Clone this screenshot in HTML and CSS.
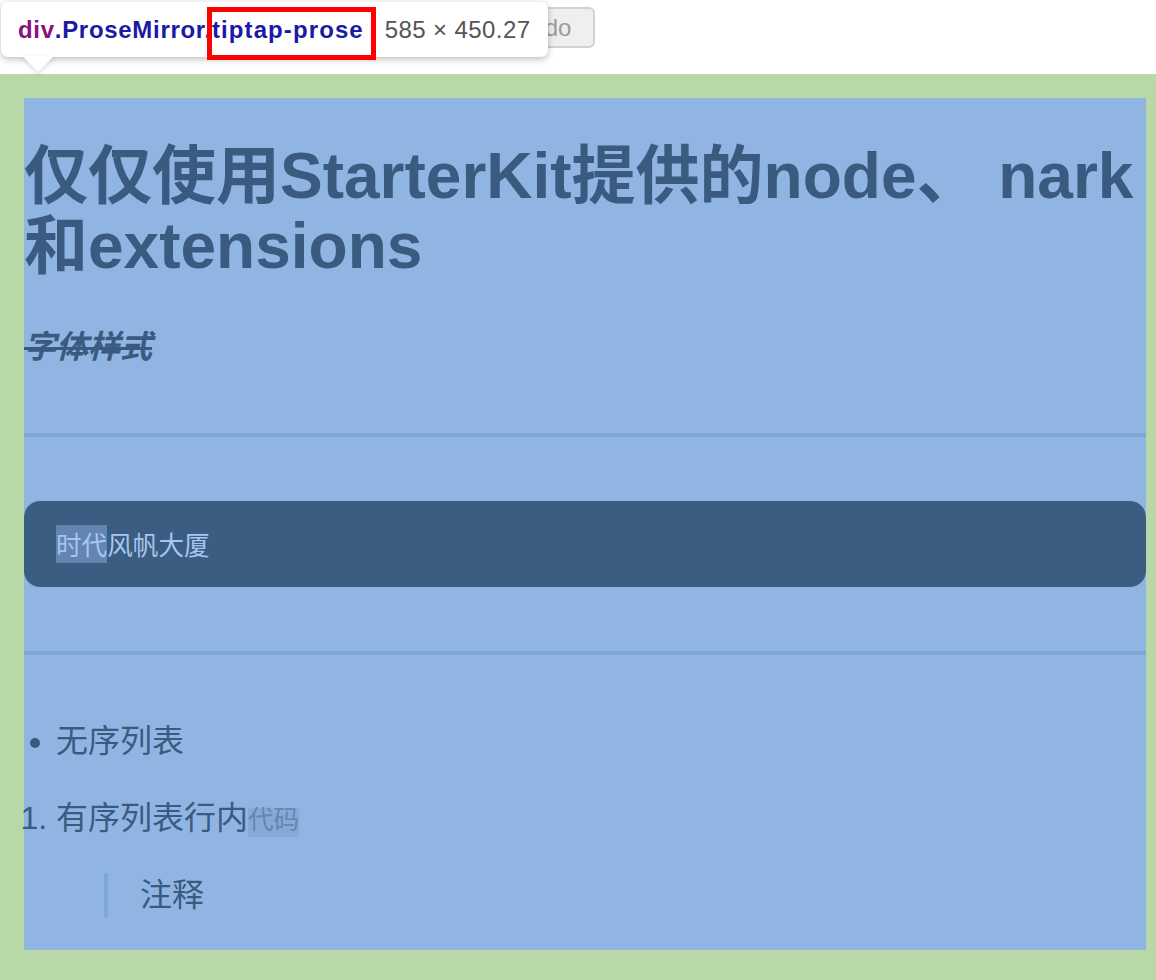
FILE: index.html
```html
<!DOCTYPE html>
<html lang="zh-CN">
<head>
<meta charset="utf-8">
<title>Tiptap</title>
<link rel="stylesheet" href="styles.css">
</head>
<body>
<div class="toolbar">
  <button class="btn" type="button">Undo</button>
</div>

<div class="editor">
  <div class="prose">
    <h1>仅仅使用StarterKit提供的node、 nark和extensions</h1>
    <p class="styled"><strong><em><s>字体样式</s></em></strong></p>
    <hr>
    <pre><code><span class="sel">时代</span>风帆大厦</code></pre>
    <hr>
    <ul>
      <li>无序列表</li>
    </ul>
    <ol>
      <li>有序列表行内<code class="inline">代码</code></li>
    </ol>
    <blockquote>注释</blockquote>
  </div>
</div>

<div class="tooltip">
  <div class="tip-text">
    <span class="tag">div</span><span class="cls">.ProseMirror.</span><span class="cls wide">tiptap-prose</span>
    <span class="size">585 × 450.27</span>
  </div>
  <div class="tip-arrow"></div>
</div>
<div class="mark"></div>
</body>
</html>
```

FILE: styles.css
```css
html, body {
  margin: 0;
  padding: 0;
  background: #ffffff;
}

body {
  font-family: "Liberation Sans", "Noto Sans CJK SC", sans-serif;
  color: #3a5a80;
}

.toolbar {
  height: 74px;
  box-sizing: border-box;
  padding: 7px 0 0 490px;
  display: flex;
  align-items: flex-start;
}

.btn {
  height: 41px;
  padding: 0 22px;
  border: 2px solid #d2d2d2;
  border-radius: 6px;
  background: #efefef;
  color: #9b9b9b;
  font-family: "Liberation Sans", sans-serif;
  font-size: 24px;
}

.editor {
  background: #b8d8a8;
  padding: 24px 10px 31px 24px;
}

.prose {
  background: #90b5e2;
  display: flow-root;
}

.prose h1 {
  font-size: 64px;
  line-height: 1.1;
  font-weight: 700;
  margin: 42.88px 0;
}

.prose p,
.prose li,
.prose blockquote {
  font-size: 32px;
  line-height: 44.8px;
}

.prose p {
  margin: 32px 0;
}

.styled strong {
  font-weight: 700;
}

.prose hr {
  border: none;
  border-top: 4px solid #7ea8d5;
  height: 0;
  margin: 64px 0;
}

.prose pre {
  margin: 32px 0;
  background: #3b5d82;
  border-radius: 16px;
  padding: 24px 32px;
  color: #a5c6ee;
  font-family: "Noto Sans CJK SC", monospace;
  font-size: 25.6px;
  line-height: 38px;
}

.prose pre code {
  font-family: inherit;
}

.sel {
  display: inline-block;
  background: #6385b0;
  line-height: 38px;
  vertical-align: top;
}

.prose ul,
.prose ol {
  margin: 32px 0;
  padding-left: 32px;
}

.inline {
  font-family: "Liberation Mono", "Noto Sans CJK SC", monospace;
  font-size: 25.6px;
  line-height: 1;
  background: #86aad7;
  color: #6486b0;
}

.prose blockquote {
  margin: 32px 80px;
  padding-left: 32px;
  border-left: 4px solid #7ea8d5;
}

/* devtools inspector tooltip overlay */
.tooltip {
  position: absolute;
  left: 1px;
  top: 2px;
  width: 547px;
  height: 55px;
  background: #ffffff;
  border-radius: 7px;
  box-shadow: 0 2px 7px rgba(0, 0, 0, 0.28);
}

.tip-text {
  display: flex;
  align-items: center;
  height: 100%;
  padding-left: 17px;
  font-family: "Liberation Sans", sans-serif;
  font-size: 24px;
  white-space: nowrap;
}

.tag {
  font-weight: 700;
  color: #881280;
  letter-spacing: 0.7px;
}

.cls {
  font-weight: 700;
  color: #1a1aa6;
  letter-spacing: 0.7px;
}

.cls.wide {
  letter-spacing: 1.1px;
}

.size {
  margin-left: 21px;
  color: #555555;
  letter-spacing: 0.4px;
}

.tip-arrow {
  position: absolute;
  left: 21px;
  top: 54px;
  width: 0;
  height: 0;
  border-left: 16px solid transparent;
  border-right: 16px solid transparent;
  border-top: 16px solid #ffffff;
  filter: drop-shadow(0 2px 2px rgba(0, 0, 0, 0.15));
}

.mark {
  position: absolute;
  left: 207px;
  top: 7px;
  width: 159px;
  height: 43px;
  border: 5px solid #ff0000;
}
```
